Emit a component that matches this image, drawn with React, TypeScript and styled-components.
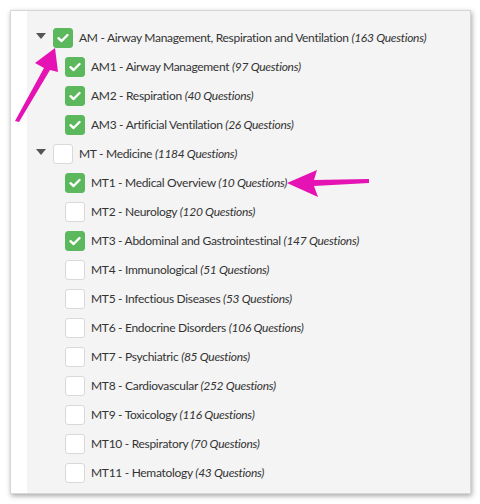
import styled, { createGlobalStyle } from 'styled-components';

const GlobalStyle = createGlobalStyle`
  html, body {
    margin: 0;
    padding: 0;
    background: #ffffff;
  }
  body {
    font-family: Lato, "Open Sans", sans-serif;
  }
`;

type Item = { code: string; name: string; count: number; checked: boolean };
type Group = { code: string; name: string; count: number; checked: boolean; items: Item[] };

const groups: Group[] = [
  {
    code: 'AM',
    name: 'Airway Management, Respiration and Ventilation',
    count: 163,
    checked: true,
    items: [
      { code: 'AM1', name: 'Airway Management', count: 97, checked: true },
      { code: 'AM2', name: 'Respiration', count: 40, checked: true },
      { code: 'AM3', name: 'Artificial Ventilation', count: 26, checked: true },
    ],
  },
  {
    code: 'MT',
    name: 'Medicine',
    count: 1184,
    checked: false,
    items: [
      { code: 'MT1', name: 'Medical Overview', count: 10, checked: true },
      { code: 'MT2', name: 'Neurology', count: 120, checked: false },
      { code: 'MT3', name: 'Abdominal and Gastrointestinal', count: 147, checked: true },
      { code: 'MT4', name: 'Immunological', count: 51, checked: false },
      { code: 'MT5', name: 'Infectious Diseases', count: 53, checked: false },
      { code: 'MT6', name: 'Endocrine Disorders', count: 106, checked: false },
      { code: 'MT7', name: 'Psychiatric', count: 85, checked: false },
      { code: 'MT8', name: 'Cardiovascular', count: 252, checked: false },
      { code: 'MT9', name: 'Toxicology', count: 116, checked: false },
      { code: 'MT10', name: 'Respiratory', count: 70, checked: false },
      { code: 'MT11', name: 'Hematology', count: 43, checked: false },
    ],
  },
];

const Check = ({ on }: { on: boolean }) => (
  <Box $on={on}>
    {on && (
      <svg width="12" height="10" viewBox="0 0 12 10">
        <path d="M1.5 5.2 L4.6 8 L10.5 2" fill="none" stroke="#fff" strokeWidth="2.4" strokeLinecap="round" strokeLinejoin="round" />
      </svg>
    )}
  </Box>
);

const Label = ({ code, name, count }: { code: string; name: string; count: number }) => (
  <Text>
    {code} - {name} <Count>({count} Questions)</Count>
  </Text>
);

const App = () => {
  return (
    <>
      <GlobalStyle />
      <Page>
        <Panel>
          <Gutter />
          <Tree>
            {groups.map((g) => (
              <div key={g.code}>
                <ParentRow>
                  <Caret />
                  <Check on={g.checked} />
                  <Label code={g.code} name={g.name} count={g.count} />
                </ParentRow>
                {g.items.map((it) => (
                  <ChildRow key={it.code}>
                    <Check on={it.checked} />
                    <Label code={it.code} name={it.name} count={it.count} />
                  </ChildRow>
                ))}
              </div>
            ))}
          </Tree>
        </Panel>

        <Arrows width="480" height="504" viewBox="0 0 480 504">
          {/* arrow pointing at the AM checkbox */}
          <path d="M15 121 L44 68 L35 63 L55 48 L58 72 L50 70 L19 122 Z" fill="#e512b4" />
          {/* arrow pointing at MT1 */}
          <path d="M287 183 L317 170 L314 180 L369 179 L369 183 L314 186 L318 197 Z" fill="#e512b4" />
        </Arrows>
      </Page>
    </>
  );
};

export default App;

const Page = styled.div`
  position: relative;
  width: 480px;
  height: 504px;
  padding: 10px;
  box-sizing: border-box;
  overflow: hidden;
`;

const Panel = styled.div`
  display: flex;
  width: 461px;
  height: 484px;
  border: 1px solid #d6d6d6;
  box-sizing: border-box;
  box-shadow: 1px 2px 5px rgba(0, 0, 0, 0.35);
  overflow: hidden;
`;

const Gutter = styled.div`
  width: 16px;
  background: #ffffff;
  flex-shrink: 0;
`;

const Tree = styled.div`
  flex: 1;
  background: #f4f4f4;
  padding-top: 12px;
`;

const Row = styled.div`
  display: flex;
  align-items: center;
  height: 29px;
`;

const ParentRow = styled(Row)`
  padding-left: 9px;
  gap: 6px;
`;

const ChildRow = styled(Row)`
  padding-left: 38px;
  gap: 6px;
`;

const Caret = styled.span`
  width: 0;
  height: 0;
  border-left: 5px solid transparent;
  border-right: 5px solid transparent;
  border-top: 6px solid #555;
  margin-right: 1px;
  margin-top: -4px;
`;

const Box = styled.span<{ $on: boolean }>`
  display: flex;
  align-items: center;
  justify-content: center;
  width: 20px;
  height: 20px;
  box-sizing: border-box;
  border-radius: 3px;
  flex-shrink: 0;
  background: ${(p) => (p.$on ? '#5cb85c' : '#ffffff')};
  border: 1px solid ${(p) => (p.$on ? '#5cb85c' : '#d9d9d9')};
`;

const Text = styled.span`
  font-size: 12px;
  letter-spacing: -0.3px;
  color: #333;
  white-space: nowrap;
`;

const Count = styled.em`
  font-style: italic;
`;

const Arrows = styled.svg`
  position: absolute;
  left: 0;
  top: 0;
  pointer-events: none;
`;
